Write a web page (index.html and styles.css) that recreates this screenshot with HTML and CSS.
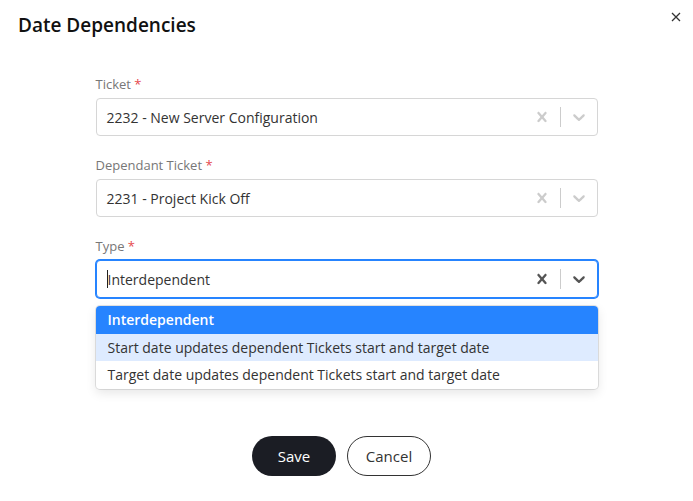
FILE: index.html
```html
<!DOCTYPE html>
<html lang="en">
<head>
    <meta charset="UTF-8">
    <title>Date Dependencies</title>
    <link rel="stylesheet" href="styles.css">
</head>
<body>
    <div class="modal">
        <div class="modal-header">
            <h1>Date Dependencies</h1>
            <button class="close" aria-label="Close">
                <svg width="10" height="10" viewBox="0 0 10 10"><path d="M1 1L9 9M9 1L1 9" stroke="#333" stroke-width="1.3" fill="none"/></svg>
            </button>
        </div>

        <div class="form">
            <div class="field">
                <label>Ticket <span class="req">*</span></label>
                <div class="select">
                    <div class="value">2232 - New Server Configuration</div>
                    <div class="indicators">
                        <span class="ind"><svg width="20" height="20" viewBox="0 0 20 20"><path d="M14.348 14.849c-0.469 0.469-1.229 0.469-1.697 0l-2.651-3.030-2.651 3.029c-0.469 0.469-1.229 0.469-1.697 0-0.469-0.469-0.469-1.229 0-1.697l2.758-3.15-2.759-3.152c-0.469-0.469-0.469-1.228 0-1.697s1.228-0.469 1.697 0l2.652 3.031 2.651-3.031c0.469-0.469 1.228-0.469 1.697 0s0.469 1.229 0 1.697l-2.758 3.152 2.758 3.15c0.469 0.469 0.469 1.229 0 1.698z"/></svg></span>
                        <span class="sep"></span>
                        <span class="ind"><svg width="20" height="20" viewBox="0 0 20 20"><path d="M4.516 7.548c0.436-0.446 1.043-0.481 1.576 0l3.908 3.747 3.908-3.747c0.533-0.481 1.141-0.446 1.574 0 0.436 0.445 0.408 1.197 0 1.615-0.406 0.418-4.695 4.502-4.695 4.502-0.217 0.223-0.502 0.335-0.787 0.335s-0.57-0.112-0.789-0.335c0 0-4.287-4.084-4.695-4.502s-0.436-1.17 0-1.615z"/></svg></span>
                    </div>
                </div>
            </div>

            <div class="field">
                <label>Dependant Ticket <span class="req">*</span></label>
                <div class="select">
                    <div class="value">2231 - Project Kick Off</div>
                    <div class="indicators">
                        <span class="ind"><svg width="20" height="20" viewBox="0 0 20 20"><path d="M14.348 14.849c-0.469 0.469-1.229 0.469-1.697 0l-2.651-3.030-2.651 3.029c-0.469 0.469-1.229 0.469-1.697 0-0.469-0.469-0.469-1.229 0-1.697l2.758-3.15-2.759-3.152c-0.469-0.469-0.469-1.228 0-1.697s1.228-0.469 1.697 0l2.652 3.031 2.651-3.031c0.469-0.469 1.228-0.469 1.697 0s0.469 1.229 0 1.697l-2.758 3.152 2.758 3.15c0.469 0.469 0.469 1.229 0 1.698z"/></svg></span>
                        <span class="sep"></span>
                        <span class="ind"><svg width="20" height="20" viewBox="0 0 20 20"><path d="M4.516 7.548c0.436-0.446 1.043-0.481 1.576 0l3.908 3.747 3.908-3.747c0.533-0.481 1.141-0.446 1.574 0 0.436 0.445 0.408 1.197 0 1.615-0.406 0.418-4.695 4.502-4.695 4.502-0.217 0.223-0.502 0.335-0.787 0.335s-0.57-0.112-0.789-0.335c0 0-4.287-4.084-4.695-4.502s-0.436-1.170 0-1.615z"/></svg></span>
                    </div>
                </div>
            </div>

            <div class="field">
                <label>Type <span class="req">*</span></label>
                <div class="select-wrap">
                    <div class="select focused">
                        <div class="value"><span class="caret"></span>Interdependent</div>
                        <div class="indicators">
                            <span class="ind"><svg width="20" height="20" viewBox="0 0 20 20"><path d="M14.348 14.849c-0.469 0.469-1.229 0.469-1.697 0l-2.651-3.030-2.651 3.029c-0.469 0.469-1.229 0.469-1.697 0-0.469-0.469-0.469-1.229 0-1.697l2.758-3.15-2.759-3.152c-0.469-0.469-0.469-1.228 0-1.697s1.228-0.469 1.697 0l2.652 3.031 2.651-3.031c0.469-0.469 1.228-0.469 1.697 0s0.469 1.229 0 1.697l-2.758 3.152 2.758 3.15c0.469 0.469 0.469 1.229 0 1.698z"/></svg></span>
                            <span class="sep"></span>
                            <span class="ind"><svg width="20" height="20" viewBox="0 0 20 20"><path d="M4.516 7.548c0.436-0.446 1.043-0.481 1.576 0l3.908 3.747 3.908-3.747c0.533-0.481 1.141-0.446 1.574 0 0.436 0.445 0.408 1.197 0 1.615-0.406 0.418-4.695 4.502-4.695 4.502-0.217 0.223-0.502 0.335-0.787 0.335s-0.57-0.112-0.789-0.335c0 0-4.287-4.084-4.695-4.502s-0.436-1.17 0-1.615z"/></svg></span>
                        </div>
                    </div>
                    <div class="menu">
                        <div class="option selected">Interdependent</div>
                        <div class="option hover">Start date updates dependent Tickets start and target date</div>
                        <div class="option">Target date updates dependent Tickets start and target date</div>
                    </div>
                </div>
            </div>
        </div>

        <div class="actions">
            <button class="btn btn-dark">Save</button>
            <button class="btn btn-outline">Cancel</button>
        </div>
    </div>
</body>
</html>
```

FILE: styles.css
```css
body { margin: 0; background: #fff; font-family: "Open Sans", "Liberation Sans", sans-serif; color: #333; }
.modal { width: 693px; height: 501px; }
.modal-header { display: flex; justify-content: space-between; align-items: flex-start; padding: 12px 9px 0 18px; }
.modal-header h1 { margin: 0; font-size: 19px; font-weight: 600; line-height: 26px; color: #111; }
.close { border: 0; background: none; padding: 0; margin-top: -3px; width: 16px; height: 16px; cursor: pointer; }

.form { width: 502px; margin: 36px auto 0; }
.field { margin-bottom: 19px; }
.field label { display: block; font-size: 13px; line-height: 20px; color: #777; margin-bottom: 4px; }
.req { color: #e5484d; }

.select { display: flex; align-items: center; height: 38px; box-sizing: border-box; border: 1px solid #d6d6d6; border-radius: 4px; background: #fff; }
.select.focused { border-color: #2684ff; box-shadow: 0 0 0 1px #2684ff; }
.value { flex: 1; padding: 0 10px; font-size: 14px; color: #333; display: flex; align-items: center; }
.caret { display: inline-block; width: 1px; height: 18px; background: #222; }
.indicators { display: flex; align-items: center; align-self: stretch; }
.ind { display: flex; padding: 8px; fill: #ccc; }
.focused .ind { fill: #555; }
.sep { width: 1px; align-self: stretch; margin: 8px 0; background: #ccc; }

.select-wrap { position: relative; }
.menu { position: absolute; top: 46px; left: 0; right: 0; background: #fff; border-radius: 4px; overflow: hidden;
    box-shadow: 0 0 0 1px rgba(0,0,0,0.1), 0 4px 11px rgba(0,0,0,0.1); }
.option { padding: 0 12px; height: 27.5px; line-height: 27.5px; font-size: 14px; color: #333; }
.option.selected { background: #2684ff; color: #fff; font-weight: 600; }
.option.hover { background: #deebff; }

.actions { display: flex; justify-content: center; gap: 11px; margin-top: 138px; padding-right: 10px; }
.btn { width: 84px; height: 40px; border-radius: 20px; font-family: inherit; font-size: 15px; cursor: pointer; }
.btn-dark { background: #1b1d24; color: #fff; border: 0; font-weight: 500; }
.btn-outline { background: #fff; color: #333; border: 1px solid #333; }
```
